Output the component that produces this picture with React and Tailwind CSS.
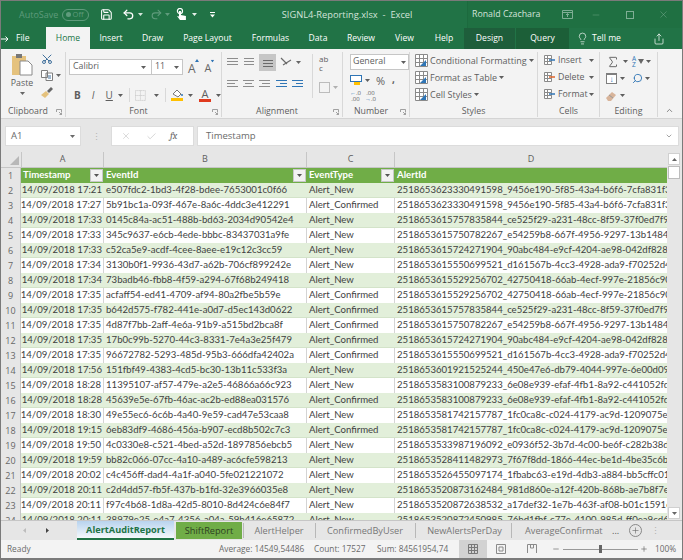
import React from "react";
import { Save, Undo2, Redo2, ChevronDown, Scissors, Lightbulb, Share, Plus, Search, Sigma, Minus, X, Check } from "lucide-react";

const a1 = "2518653623330491598_9456e190-5f85-43a4-b6f6-7cfa831f3d4e";
const a2 = "2518653615757835844_ce525f29-a231-48cc-8f59-37f0ed7f95a1";
const a3 = "2518653615750782267_e54259b8-667f-4956-9297-13b148441c2d";
const a4 = "2518653615724271904_90abc484-e9cf-4204-ae98-042df828f1b3";
const a5 = "2518653615550699521_d161567b-4cc3-4928-ada9-f70252d47e10";
const a6 = "2518653615529256702_42750418-66ab-4ecf-997e-21856c90f2d6";
const a7 = "2518653583100879233_6e08e939-efaf-4fb1-8a92-c441052fd7a3";
const a8 = "2518653581742157787_1fc0ca8c-c024-4179-ac9d-1209075ecf81";

const rows = [
  ["17:21", "e507fdc2-1bd3-4f28-bdee-7653001c0f66", "Alert_New", a1],
  ["17:27", "5b91bc1a-093f-467e-8a6c-4ddc3e412291", "Alert_Confirmed", a1],
  ["17:33", "0145c84a-ac51-488b-bd63-2034d90542e4", "Alert_New", a2],
  ["17:33", "345c9637-e6cb-4ede-bbbc-83437031a9fe", "Alert_New", a3],
  ["17:33", "c52ca5e9-acdf-4cee-8aee-e19c12c3cc59", "Alert_New", a4],
  ["17:34", "3130b0f1-9936-43d7-a62b-706cf899242e", "Alert_New", a5],
  ["17:34", "73badb46-fbb8-4f59-a294-67f68b249418", "Alert_New", a6],
  ["17:35", "acfaff54-ed41-4709-af94-80a2fbe5b59e", "Alert_Confirmed", a6],
  ["17:35", "b642d575-f782-441e-a0d7-d5ec143d0622", "Alert_Confirmed", a2],
  ["17:35", "4d87f7bb-2aff-4e6a-91b9-a515bd2bca8f", "Alert_Confirmed", a3],
  ["17:35", "17b0c99b-5270-44c3-8331-7e4a3e25f479", "Alert_Confirmed", a4],
  ["17:35", "96672782-5293-485d-95b3-666dfa42402a", "Alert_Confirmed", a5],
  ["17:56", "151fbf49-4383-4cd5-bc30-13b11c533f3a", "Alert_New", "2518653601921525244_450e47e6-db79-4044-997e-6e00d09a2b1c"],
  ["18:28", "11395107-af57-479e-a2e5-46866a66c923", "Alert_New", a7],
  ["18:28", "45639e5e-67fb-46ac-ac2b-ed88ea031576", "Alert_Confirmed", a7],
  ["18:30", "49e55ec6-6c6b-4a40-9e59-cad47e53caa8", "Alert_New", a8],
  ["19:15", "6eb83df9-4686-456a-b907-ecd8b502c7c3", "Alert_Confirmed", a8],
  ["19:50", "4c0330e8-c521-4bed-a52d-1897856ebcb5", "Alert_New", "2518653533987196092_e0936f52-3b7d-4c00-be6f-c282b38d9e44"],
  ["19:59", "bb82c066-07cc-4a10-a489-ac6cfe598213", "Alert_New", "2518653528411482973_7f67f8dd-1866-44ec-be1d-4be35c6b0a72"],
  ["20:02", "c4c456ff-dad4-4a1f-a040-5fe021221072", "Alert_New", "2518653526455097174_1fbabc63-e19d-4db3-a884-bb5cffc01d39"],
  ["20:11", "c2d4dd57-fb5f-437b-b1fd-32e3966035e8", "Alert_New", "2518653520873162484_981d860e-a12f-420b-868b-ae7b8f7e5c10"],
  ["20:11", "f97c4b68-1d8a-42d5-8010-8d424c6e84f7", "Alert_New", "2518653520872638532_a17def32-1e7b-463f-af08-b01c1591e6d7"],
  ["20:11", "38979e25-e4a7-4356-a04a-59b416e65872", "Alert_New", "2518653520872450985_76bd1fbf-c77e-4100-985d-ff0ea9cd6b28"],
];

const Caret = ({ className = "" }) => (
  <svg width="5" height="3" viewBox="0 0 5 3" className={className}>
    <path d="M0 0h5L2.5 3z" fill="currentColor" />
  </svg>
);

const Launcher = () => (
  <svg width="6" height="6" viewBox="0 0 6 6" className="text-[#8a8a8a]">
    <path d="M.5 3V.5H5.5V3M3 3l2.5 2.5M5.5 3.5v2h-2" fill="none" stroke="currentColor" strokeWidth=".8" />
  </svg>
);

const Lines = ({ widths, color = "#8d8d8d" }) => (
  <svg width="12" height="11" viewBox="0 0 12 11">
    {widths.map((w, i) => (
      <rect key={i} x={w[0]} y={1 + i * 3} width={w[1]} height="1" fill={color} />
    ))}
  </svg>
);

function Group({ label, width, launcher, children }) {
  return (
    <div className={`${width} shrink-0 flex flex-col border-r border-[#d8d8d8] mb-px mt-[3px]`}>
      <div className="flex-1 min-h-0">{children}</div>
      <div className={`h-[11px] flex items-center justify-center relative text-[8.8px] text-[#5e5e5e] leading-none ${launcher ? "pr-[10px]" : ""}`}>
        {label}
        {launcher && (
          <span className="absolute right-[3px] top-[3px]">
            <Launcher />
          </span>
        )}
      </div>
    </div>
  );
}

function TitleBar() {
  return (
    <div className="h-[27px] flex items-center text-white">
      <span className="ml-[18px] w-[43px] text-[9px] text-[#5f9b7c]">AutoSave</span>
      <span className="w-[28px] h-[12px] rounded-full border border-[#5f9b7c] flex items-center text-[7.5px] text-[#5f9b7c] pl-[3px] gap-[2px]">
        <span className="w-[5px] h-[5px] rounded-full bg-[#5f9b7c]" />
        Off
      </span>
      <Save size={13} strokeWidth={2} className="ml-[11px]" />
      <Undo2 size={13} strokeWidth={2.4} className="ml-[9px]" />
      <Caret className="ml-[3px] text-[#d5e5dc]" />
      <Redo2 size={13} strokeWidth={2} className="ml-[7px] text-[#5f9b7c]" />
      <Caret className="ml-[2px] text-[#5f9b7c]" />
      <svg width="12" height="14" viewBox="0 0 12 14" className="ml-[6px]">
        <circle cx="4" cy="3" r="2.6" fill="none" stroke="#fff" strokeWidth="1.2" />
        <path d="M3 3h2v4l5 1v4H4L1 8l2 .5z" fill="#fff" />
      </svg>
      <Caret className="ml-[4px] text-[#e5efe9]" />
      <svg width="5" height="6" viewBox="0 0 5 6" className="ml-[13px]">
        <path d="M0 0h5v1H0zM0 2.5h5L2.5 5.5z" fill="#fff" />
      </svg>
      <span className="ml-[67px] w-[187px] text-[9.3px] text-[#d3e3da] whitespace-nowrap">SIGNL4-Reporting.xlsx&nbsp; -&nbsp; Excel</span>
      <div className="w-[217px] h-full bg-[#1f7042] flex items-center border-l border-[#1c6a3e]">
        <span className="ml-[4px] w-[86px] text-[8.8px] text-[#d3e3da] whitespace-nowrap">Ronald Czachara</span>
        <svg width="11" height="9" viewBox="0 0 11 9" className="ml-[4px]">
          <path d="M.5.5h10v8H.5zM.5 2.5h10M5.5 7V4M4 5l1.5-1.5L7 5" fill="none" stroke="#7fae95" />
        </svg>
        <Minus size={10} strokeWidth={1} className="ml-[18px] text-[#7fae95]" />
        <span className="ml-[25px] w-[8px] h-[8px] border border-[#7fae95]" />
        <X size={11} strokeWidth={1} className="ml-[24px] text-[#7fae95]" />
      </div>
    </div>
  );
}

function TabStrip() {
  const tabs = [
    ["Insert", "w-[42px]"],
    ["Draw", "w-[41px]"],
    ["Page Layout", "w-[69px]"],
    ["Formulas", "w-[57px]"],
    ["Data", "w-[38px]"],
    ["Review", "w-[48px]"],
    ["View", "w-[39px]"],
    ["Help", "w-[40px]"],
  ];
  return (
    <div className="h-[21px] flex items-stretch text-white text-[8.6px]">
      <span className="flex items-center w-[45px]">
        <svg width="8" height="6" viewBox="0 0 8 6">
          <path d="M0 3h7M4.5 .5L7 3 4.5 5.5" fill="none" stroke="#fff" strokeWidth="1" />
        </svg>
        <span className="ml-[7px]">File</span>
      </span>
      <span className="w-[44px] -mt-[1px] bg-[#f3f3f3] text-[#217346] flex items-center justify-center">Home</span>
      {tabs.map(([t, w]) => (
        <span key={t} className={`${w} flex items-center justify-center`}>{t}</span>
      ))}
      <span className="w-[51px] bg-[#1e5e3b] flex items-center justify-center">Design</span>
      <span className="w-[53px] bg-[#1c5f38] ml-px flex items-center justify-center">Query</span>
      <span className="ml-[7px] flex items-center gap-[3px]">
        <Lightbulb size={13} strokeWidth={1.2} />
        Tell me
      </span>
      <Share size={12} strokeWidth={1.4} className="ml-[32px] self-center" />
    </div>
  );
}

function Clipboard() {
  return (
    <div className="flex pl-[9px] pt-px">
      <div className="w-[24px] flex flex-col items-center">
        <svg width="22" height="23" viewBox="0 0 22 23">
          <rect x="1" y="3" width="14" height="19" fill="#e5c27d" />
          <rect x="5" y="1" width="6" height="4" fill="#777" />
          <path d="M9 8h8l4 4v10H9z" fill="#fff" stroke="#8a8a8a" />
        </svg>
        <span className="text-[8.8px] text-[#5e5e5e] leading-none mt-[3px]">Paste</span>
        <Caret className="mt-[4px] text-[#666]" />
      </div>
      <div className="ml-[7px] flex flex-col gap-[5px]">
        <Scissors size={12} className="text-[#41719c] -rotate-90" />
        <div className="flex items-center gap-[3px]">
          <svg width="12" height="11" viewBox="0 0 12 11">
            <path d="M.5.5h6v7h-6zM5 3h6.500v7.500H5z" fill="#fff" stroke="#7e7e7e" />
            <path d="M7 6h3M7 8h3" stroke="#41719c" />
          </svg>
          <Caret className="text-[#666]" />
        </div>
        <svg width="12" height="12" viewBox="0 0 12 12">
          <path d="M0 9l5-4 3 3-4 4z" fill="#e5c27d" />
          <path d="M6 5l4-4 2 2-4 4z" fill="#666" />
        </svg>
      </div>
    </div>
  );
}

const BigA = ({ up }) => (
  <span className="relative text-[12px] text-[#666] leading-none">
    A
    <span className="absolute -right-[3px] -top-[1px]">
      <svg width="4" height="3" viewBox="0 0 4 3">
        <path d={up ? "M0 3h4L2 0z" : "M0 0h4L2 3z"} fill="#2f75b5" />
      </svg>
    </span>
  </span>
);

function FontGroup() {
  return (
    <div className="pl-[3px] pt-[3px]">
      <div className="flex items-center">
        <div className="w-[83px] h-[16px] bg-white border border-[#c6c6c6] flex items-center justify-between px-[3px] text-[8.8px] text-[#5e5e5e]">
          Calibri
          <Caret className="mr-[2px]" />
        </div>
        <div className="w-[32px] h-[16px] -ml-px bg-white border border-[#c6c6c6] flex items-center justify-between px-[3px] text-[8.8px] text-[#5e5e5e]">
          11
          <Caret />
        </div>
        <span className="ml-[5px]"><BigA up /></span>
        <span className="ml-[8px] scale-90"><BigA /></span>
      </div>
      <div className="flex items-center mt-[9px] pl-[5px] text-[10px] text-[#5e5e5e] h-[14px]">
        <span className="font-bold w-[16px]">B</span>
        <span className="italic w-[15px] pl-[2px]">I</span>
        <span className="underline w-[11px] pl-px">U</span>
        <Caret className="ml-[3px]" />
        <span className="h-[14px] border-l border-[#d8d8d8] ml-[6px]" />
        <svg width="11" height="11" viewBox="0 0 11 11" className="ml-[5px]">
          <path d="M.5.5h10v10H.5zM5.500.5v10M.5 5.500h10" fill="none" stroke="#c2c2c2" strokeDasharray="1 1" />
        </svg>
        <Caret className="ml-[8px]" />
        <span className="h-[14px] border-l border-[#d8d8d8] ml-[6px]" />
        <span className="ml-[5px] flex flex-col items-center w-[12px]">
          <svg width="11" height="9" viewBox="0 0 11 9">
            <path d="M1 5l4-4 4 4-3 3z" fill="#fff" stroke="#777" />
            <circle cx="10" cy="6" r="1" fill="#2f75b5" />
          </svg>
          <span className="w-[12px] h-[3px] bg-[#ffc000]" />
        </span>
        <Caret className="ml-[5px]" />
        <span className="ml-[6px] flex flex-col items-center w-[12px] leading-none text-[11px]">
          A
          <span className="w-[12px] h-[3px] bg-[#e03a1e]" />
        </span>
        <Caret className="ml-[5px]" />
      </div>
    </div>
  );
}

function Alignment() {
  return (
    <div className="pt-[2px] pl-[5px] flex">
      <div>
        <div className="flex items-center gap-[4px] h-[17px]">
          <Lines widths={[[0, 11], [0, 11], [0, 11]]} />
          <span className="w-[12px] flex items-center"><Lines widths={[[1, 10], [1, 10], [1, 10]]} /></span>
          <span className="w-[17px] h-[17px] bg-[#c6c6c6] flex items-end justify-center pb-[1px]">
            <Lines widths={[[1, 10], [1, 10], [1, 10]]} color="#6a6a6a" />
          </span>
          <svg width="12" height="11" viewBox="0 0 12 11">
            <path d="M1 1l6 6M3 8l8-5" stroke="#6a6a6a" strokeWidth="1.2" fill="none" />
          </svg>
          <Caret className="text-[#666]" />
        </div>
        <div className="flex items-center gap-[4px] mt-[7px] h-[13px]">
          <Lines widths={[[0, 11], [0, 8], [0, 11]]} />
          <Lines widths={[[0, 11], [2, 7], [0, 11]]} />
          <Lines widths={[[0, 11], [3, 8], [0, 11]]} />
          <Lines widths={[[1, 11], [5, 7], [1, 11]]} color="#2f75b5" />
          <Lines widths={[[1, 11], [5, 7], [1, 11]]} color="#2f75b5" />
        </div>
      </div>
      <div className="ml-[9px] border-l border-[#d8d8d8] h-[44px] pl-[6px] flex flex-col gap-[10px]">
        <span className="text-[8px] leading-[9px] text-[#5e5e5e] w-[12px]">ab<br />c</span>
        <span className="flex items-center gap-[3px]">
          <span className="w-[11px] h-[11px] border border-[#bcbcbc]" />
          <Caret className="text-[#b0b0b0]" />
        </span>
      </div>
    </div>
  );
}

function NumberGroup() {
  return (
    <div className="pt-[2px] pl-[7px]">
      <div className="w-[59px] h-[16px] bg-white border border-[#c6c6c6] flex items-center justify-between px-[2px] text-[8.8px] text-[#5e5e5e]">
        General
        <Caret />
      </div>
      <div className="flex items-center mt-[3px] text-[#5e5e5e] h-[14px]">
        <svg width="12" height="11" viewBox="0 0 12 11">
          <rect x=".5" y=".5" width="11" height="6" fill="#fff" stroke="#2f75b5" />
          <rect x="4" y="7" width="6" height="3" fill="#ffc000" />
        </svg>
        <Caret className="ml-[3px]" />
        <span className="ml-[6px] text-[11px] leading-none">%</span>
        <span className="ml-[7px] font-bold text-[10px] leading-none -mt-[3px]">,</span>
      </div>
      <div className="flex items-center mt-[3px] gap-[4px] text-[6px] leading-[6px] text-[#5e5e5e]">
        <span className="text-center"><span className="text-[#2f75b5]">←</span>.0<br />.00</span>
        <span className="text-center">.00<br /><span className="text-[#2f75b5]">→</span>.0</span>
      </div>
    </div>
  );
}

const StyleRow = ({ text }) => (
  <div className="flex items-center h-[17px] text-[9px] text-[#5e5e5e] whitespace-nowrap">
    <svg width="13" height="13" viewBox="0 0 13 13" className="mr-[2px]">
      <path d="M.5.5h12v12H.5zM.5 4.500h12M.5 8.500h12M4.500.5v12M8.500.5v12" fill="#fff" stroke="#8a8a8a" />
      <path d="M5 12l6-6v6z" fill="#2f75b5" />
    </svg>
    {text}
    <Caret className="ml-[2px]" />
  </div>
);

const CellRow = ({ text, mark }) => (
  <div className="flex items-center h-[17px] text-[8.8px] text-[#5e5e5e]">
    <svg width="12" height="12" viewBox="0 0 12 12" className="mr-[2px]">
      <path d="M.5.5h7v3h-7zM.5 3.500h7v3h-7zM.5 6.500h7v3h-7zM3.500.5v9" fill="#fff" stroke="#8a8a8a" />
      <path d="M5 5h6" stroke={mark} strokeWidth="1.5" />
    </svg>
    <span className="w-[31px]">{text}</span>
    <Caret />
  </div>
);

function Editing() {
  return (
    <div className="pt-px pl-[6px] grid grid-cols-[26px_24px] text-[#5e5e5e]">
      <div className="h-[17px] flex items-center gap-[3px]">
        <Sigma size={14} strokeWidth={1.6} />
        <Caret />
      </div>
      <div className="h-[17px] flex items-center gap-[2px]">
        <span className="text-[6.5px] leading-[6px] text-[#2f75b5]">A<br />Z</span>
        <span className="w-0 h-0 border-x-[3px] border-x-transparent border-t-[5px] border-t-[#666]" />
        <Caret />
      </div>
      <div className="h-[17px] flex items-center gap-[3px]">
        <span className="w-[11px] h-[11px] bg-white border border-[#7e7e7e] border-t-2 flex items-center justify-center text-[#2f75b5] text-[8px] leading-none">↓</span>
        <Caret />
      </div>
      <div className="h-[17px] flex items-center gap-[2px]">
        <Search size={11} strokeWidth={2} className="text-[#2f75b5] -scale-x-100" />
        <Caret />
      </div>
      <div className="h-[17px] flex items-center gap-[3px]">
        <svg width="11" height="10" viewBox="0 0 11 10">
          <path d="M0 7l6-6 4 3-5 6H2z" fill="#d8b49a" />
          <path d="M3 4l4 3" stroke="#999" />
        </svg>
        <Caret />
      </div>
    </div>
  );
}

function Ribbon() {
  return (
    <div className="h-[70px] shrink-0 flex bg-[#f3f3f3] border-b border-[#d4d4d4]">
      <Group label="Clipboard" width="w-[65px]" launcher><Clipboard /></Group>
      <Group label="Font" width="w-[156px]" launcher><FontGroup /></Group>
      <Group label="Alignment" width="w-[121px]" launcher><Alignment /></Group>
      <Group label="Number" width="w-[67px]" launcher><NumberGroup /></Group>
      <Group label="Styles" width="w-[128px]">
        <div className="pl-[5px]">
          <StyleRow text="Conditional Formatting" />
          <StyleRow text="Format as Table" />
          <StyleRow text="Cell Styles" />
        </div>
      </Group>
      <Group label="Cells" width="w-[62px]">
        <div className="pl-[6px]">
          <CellRow text="Insert" mark="#2f75b5" />
          <CellRow text="Delete" mark="#e0642a" />
          <CellRow text="Format" mark="#2f75b5" />
        </div>
      </Group>
      <Group label="Editing" width="w-[58px]"><Editing /></Group>
      <div className="flex-1 flex items-end justify-center pb-[3px] pr-[1px]">
        <ChevronDown size={9} strokeWidth={2} className="rotate-180 text-[#666]" />
      </div>
    </div>
  );
}

function FormulaBar() {
  return (
    <div className="h-[20px] shrink-0 mt-[7px] flex items-stretch text-[9.5px] text-[#6a6a6a] pl-[4px]">
      <div className="w-[76px] bg-white border border-[#dcdcdc] flex items-center justify-between pl-[5px] pr-[5px]">
        A1
        <Caret />
      </div>
      <span className="ml-[11px] self-center text-[#b3b3b3] text-[9px] leading-none">⋮</span>
      <div className="ml-[10px] w-[83px] bg-white border border-[#dcdcdc] flex items-center">
        <X size={10} strokeWidth={1.3} className="ml-[9px] text-[#bcbcbc]" />
        <Check size={11} strokeWidth={1.3} className="ml-[15px] text-[#bcbcbc]" />
        <span className="ml-[13px] italic font-serif text-[10px] text-[#666]">fx</span>
      </div>
      <div className="ml-[3px] w-[482px] bg-white border border-[#dcdcdc] flex items-center justify-between pl-[8px] pr-[5px]">
        Timestamp
        <ChevronDown size={8} strokeWidth={2} className="text-[#777]" />
      </div>
    </div>
  );
}

const FilterBtn = () => (
  <span className="w-[13px] h-[13px] shrink-0 bg-[#f2f2f2] border border-[#c8c8c8] flex items-center justify-center text-[#555]">
    <Caret />
  </span>
);

const cell = "h-full overflow-hidden whitespace-nowrap flex items-center shrink-0";

function Sheet() {
  return (
    <div className="flex-1 min-h-0 overflow-hidden flex mt-[6px]">
      <div className="w-[666px] shrink-0 overflow-hidden font-['Lato','Liberation_Sans',sans-serif] text-[9.6px] text-[#3f3f3f]">
        <div className="h-[16px] flex text-[9px] text-[#5e5e5e] font-['Open_Sans',sans-serif] bg-[#e6e6e6] border-b border-[#c6c6c6]">
          <div className="w-[20px] flex items-end justify-end pr-[2px] pb-[2px]">
            <span className="w-0 h-0 border-l-[9px] border-l-transparent border-b-[9px] border-b-[#b8b8b8]" />
          </div>
          <div className="w-[83px] text-center border-x border-[#c6c6c6]">A</div>
          <div className="w-[203px] text-center border-r border-[#c6c6c6]">B</div>
          <div className="w-[88px] text-center border-r border-[#c6c6c6]">C</div>
          <div className="flex-1 text-center">D</div>
        </div>
        <div className="h-[15px] flex items-stretch">
          <div className="w-[20px] bg-[#e6e6e6] border-r border-[#c6c6c6] text-[#666] flex items-center justify-center font-['Open_Sans',sans-serif] text-[9px]">1</div>
          <div className="flex-1 flex bg-[#70ad47] text-white font-bold">
            <div className={`${cell} w-[83px] pl-[2px] pr-px justify-between`}>Timestamp<FilterBtn /></div>
            <div className={`${cell} w-[203px] pl-[2px] pr-px justify-between`}>EventId<FilterBtn /></div>
            <div className={`${cell} w-[88px] pl-[2px] pr-px justify-between`}>EventType<FilterBtn /></div>
            <div className={`${cell} flex-1 pl-[2px]`}>AlertId</div>
          </div>
        </div>
        {rows.map((r, i) => (
          <div key={i} className="h-[15px] flex items-stretch">
            <div className="w-[20px] bg-[#e6e6e6] border-r border-[#c6c6c6] text-[#666] flex items-center justify-center font-['Open_Sans',sans-serif] text-[9px]">{i + 2}</div>
            <div className={`flex-1 flex min-w-0 ${i % 2 === 0 ? "bg-[#e2efda] border-b border-[#d3e3c9]" : "bg-white"}`}>
              <div className={`${cell} w-[83px] justify-end pr-[2px] ${i % 2 ? "border-r border-[#d4d4d4]" : ""}`}>14/09/2018 {r[0]}</div>
              <div className={`${cell} w-[203px] pl-[2px] ${i % 2 ? "border-r border-[#d4d4d4]" : ""}`}>{r[1]}</div>
              <div className={`${cell} w-[88px] pl-[2px] ${i % 2 ? "border-r border-[#d4d4d4]" : ""}`}>{r[2]}</div>
              <div className={`${cell} w-[272px] pl-[2px]`}>{r[3]}</div>
            </div>
          </div>
        ))}
      </div>
      <div className="flex-1 flex flex-col items-center bg-[#e6e6e6] pr-[2px] pl-px">
        <span className="w-[12px] h-[12px] mt-px bg-white border border-[#d0d0d0] flex items-center justify-center text-[#666]"><Caret className="rotate-180" /></span>
        <span className="w-[12px] h-[13px] mt-px bg-white border border-[#bdbdbd]" />
        <span className="flex-1" />
        <span className="w-[12px] h-[12px] mb-px bg-white border border-[#d0d0d0] flex items-center justify-center text-[#666]"><Caret /></span>
      </div>
    </div>
  );
}

function SheetTabs() {
  const plain = [
    ["AlertHelper", "w-[71px]"],
    ["ConfirmedByUser", "w-[99px]"],
    ["NewAlertsPerDay", "w-[98px]"],
  ];
  return (
    <div className="h-[20px] shrink-0 flex items-center bg-[#e6e6e6] text-[9.2px] text-[#777] border-t border-[#c6c6c6]">
      <span className="ml-[21px] text-[#bdbdbd] rotate-90"><Caret /></span>
      <span className="ml-[18px] text-[#444] -rotate-90"><Caret /></span>
      <div className="ml-[27px] w-[97px] h-[19px] self-start bg-gradient-to-b from-[#b8d3ee] to-[#f5f8fb] border-b-2 border-[#217346] text-[#217346] font-bold flex items-center justify-center whitespace-nowrap">AlertAuditReport</div>
      <div className="ml-[2px] w-[66px] h-[17px] bg-[#70ad47] text-[#2d3f22] flex items-center justify-center">ShiftReport</div>
      {plain.map(([t, w]) => (
        <div key={t} className={`${w} h-[15px] border-l border-[#b8b8b8] flex items-center justify-center whitespace-nowrap ml-px`}>{t}</div>
      ))}
      <div className="border-l border-[#b8b8b8] h-[15px] ml-[-2px] pl-[13px] w-[92px] flex items-center whitespace-nowrap overflow-hidden">AverageConfirmat</div>
      <span className="text-[#555] ml-[9px] leading-none">...</span>
      <span className="ml-[10px] w-[13px] h-[13px] rounded-full border border-[#888] flex items-center justify-center">
        <Plus size={9} strokeWidth={1.6} className="text-[#666]" />
      </span>
      <span className="ml-[9px] text-[#b0b0b0] leading-none">⋮</span>
    </div>
  );
}

function StatusBar() {
  return (
    <div className="h-[18px] shrink-0 flex items-stretch bg-[#f3f3f3] text-[8.3px] text-[#6a6a6a] whitespace-nowrap">
      <span className="ml-[6px] w-[212px] flex items-center">Ready</span>
      <span className="w-[95px] flex items-center">Average: 14549,54486</span>
      <span className="w-[63px] flex items-center">Count: 17527</span>
      <span className="w-[82px] flex items-center">Sum: 84561954,74</span>
      <span className="w-[28px] bg-[#d2d2d2] flex items-center justify-center">
        <svg width="10" height="10" viewBox="0 0 10 10">
          <path d="M.5.5h9v9h-9zM3.500.5v9M6.500.5v9M.5 3.500h9M.5 6.500h9" fill="none" stroke="#777" />
        </svg>
      </span>
      <span className="w-[28px] flex items-center justify-center">
        <svg width="10" height="10" viewBox="0 0 10 10">
          <path d="M.5.5h9v9h-9zM3 3h4v4H3z" fill="none" stroke="#8a8a8a" />
        </svg>
      </span>
      <span className="w-[34px] flex items-center justify-center">
        <svg width="10" height="10" viewBox="0 0 10 10">
          <path d="M.5 9V.5h9V9M3.500.5V4h3V.5" fill="none" stroke="#8a8a8a" />
        </svg>
      </span>
      <span className="ml-[3px] flex items-center">
        <Minus size={8} strokeWidth={2} className="text-[#666]" />
        <span className="ml-[3px] w-[36px] h-px bg-[#999]" />
        <span className="w-[3px] h-[8px] bg-[#666]" />
        <span className="w-[36px] h-px bg-[#999]" />
        <Plus size={8} strokeWidth={2} className="ml-[2px] text-[#666]" />
        <span className="ml-[7px]">100%</span>
      </span>
    </div>
  );
}

export default function App() {
  return (
    <div className="w-[683px] h-[560px] overflow-hidden flex flex-col bg-[#e6e6e6] border-x border-t border-b-2 border-[#7a7a7a] font-['Open_Sans',sans-serif]">
      <div className="bg-[#217346] shrink-0">
        <TitleBar />
        <TabStrip />
      </div>
      <Ribbon />
      <FormulaBar />
      <Sheet />
      <SheetTabs />
      <StatusBar />
    </div>
  );
}
